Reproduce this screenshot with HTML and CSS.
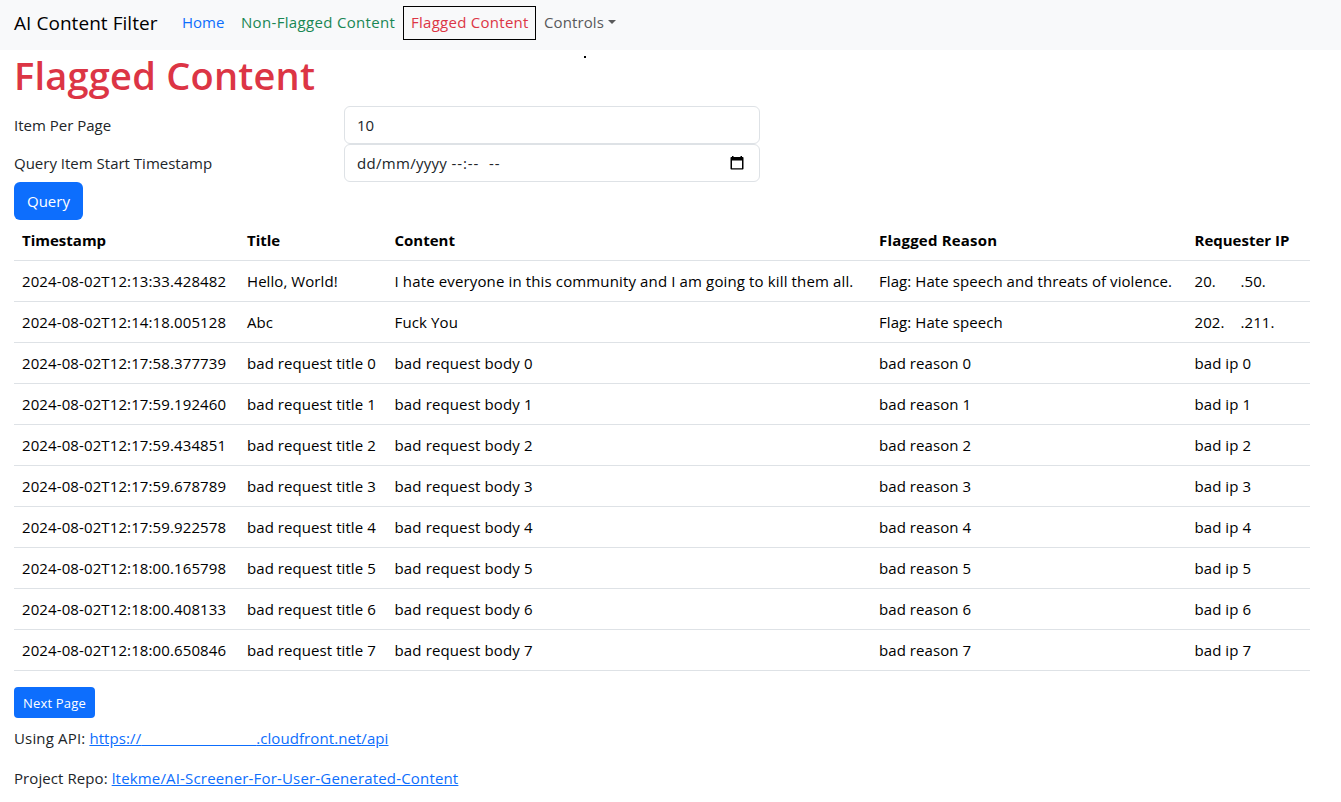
FILE: index.html
```html
<!DOCTYPE html>
<html lang="en">
<head>
<meta charset="utf-8">
<title>AI Content Filter</title>
<link rel="stylesheet" href="styles.css">
</head>
<body>
<nav class="navbar">
  <a class="brand">AI Content Filter</a>
  <a class="nav-link home">Home</a>
  <a class="nav-link safe">Non-Flagged Content</a>
  <a class="nav-link flagged active">Flagged Content</a>
  <a class="nav-link controls">Controls<span class="caret"></span></a>
  <span class="dot"></span>
</nav>
<main class="page">
  <h1 class="title">Flagged Content</h1>
  <form class="query">
    <label>Item Per Page</label>
    <div class="field"><span>10</span></div>
    <label>Query Item Start Timestamp</label>
    <div class="field"><span class="date">dd/mm/yyyy <span class="time">--:--&nbsp; --</span></span>
      <svg class="calendar" viewBox="0 0 16 16"><path fill="#000" fill-rule="evenodd" d="M3 1h1.500v1h7V1H13v1h.7c.5 0 .8.4.8.8v10.900c0 .5-.4.8-.8.8H2.300c-.5 0-.8-.4-.8-.8V2.800c0-.5.4-.8.8-.8H3zM3 5.500V13.300h10V5.500z"/></svg>
    </div>
    <button type="button" class="btn">Query</button>
  </form>
  <table class="items">
    <colgroup><col class="c-time"><col class="c-title"><col class="c-content"><col class="c-reason"><col class="c-ip"></colgroup>
    <thead><tr><th>Timestamp</th><th>Title</th><th>Content</th><th class="h-reason">Flagged Reason</th><th>Requester IP</th></tr></thead>
    <tbody>
      <tr><td>2024-08-02T12:13:33.428482</td><td>Hello, World!</td><td>I hate everyone in this community and I am going to kill them all.</td><td>Flag: Hate speech and threats of violence.</td><td><span class="ip-head">20.</span>.50.</td></tr>
      <tr><td>2024-08-02T12:14:18.005128</td><td>Abc</td><td>Fuck You</td><td>Flag: Hate speech</td><td><span class="ip-head">202.</span>.211.</td></tr>
      <tr><td>2024-08-02T12:17:58.377739</td><td>bad request title 0</td><td>bad request body 0</td><td>bad reason 0</td><td>bad ip 0</td></tr>
      <tr><td>2024-08-02T12:17:59.192460</td><td>bad request title 1</td><td>bad request body 1</td><td>bad reason 1</td><td>bad ip 1</td></tr>
      <tr><td>2024-08-02T12:17:59.434851</td><td>bad request title 2</td><td>bad request body 2</td><td>bad reason 2</td><td>bad ip 2</td></tr>
      <tr><td>2024-08-02T12:17:59.678789</td><td>bad request title 3</td><td>bad request body 3</td><td>bad reason 3</td><td>bad ip 3</td></tr>
      <tr><td>2024-08-02T12:17:59.922578</td><td>bad request title 4</td><td>bad request body 4</td><td>bad reason 4</td><td>bad ip 4</td></tr>
      <tr><td>2024-08-02T12:18:00.165798</td><td>bad request title 5</td><td>bad request body 5</td><td>bad reason 5</td><td>bad ip 5</td></tr>
      <tr><td>2024-08-02T12:18:00.408133</td><td>bad request title 6</td><td>bad request body 6</td><td>bad reason 6</td><td>bad ip 6</td></tr>
      <tr><td>2024-08-02T12:18:00.650846</td><td>bad request title 7</td><td>bad request body 7</td><td>bad reason 7</td><td>bad ip 7</td></tr>
    </tbody>
  </table>
  <button type="button" class="btn btn-sm">Next Page</button>
  <p class="note api">Using API: <a class="link">https://<span class="gap">&nbsp;</span>.cloudfront.net/api</a></p>
  <p class="note">Project Repo: <a class="link repo">ltekme/AI-Screener-For-User-Generated-Content</a></p>
</main>
</body>
</html>
```
FILE: styles.css
```css
* { box-sizing: border-box; }
body {
  margin: 0;
  background: #fff;
  color: #212529;
  font-family: "Segoe UI", "Open Sans", "Noto Sans", sans-serif;
  font-size: 15px;
  line-height: 24px;
  overflow: hidden;
}
.navbar {
  position: relative;
  display: flex;
  align-items: center;
  height: 50px;
  padding: 0 14px 4px;
  background: #f8f9fa;
  white-space: nowrap;
}
.brand { width: 160px; font-size: 19px; letter-spacing: .05px; color: #000; }
.nav-link { height: 34px; padding: 3px 0 0 7px; border: 1px solid transparent; }
.home { width: 59px; color: #0d6efd; }
.safe { width: 170px; letter-spacing: .33px; color: #198754; }
.flagged { width: 133px; letter-spacing: .27px; color: #dc3545; }
.active { border-color: #000; }
.controls { display: flex; gap: 4px; letter-spacing: .1px; color: #595a5b; }
.caret { align-self: flex-start; margin-top: 10px; border: 4.5px solid transparent; border-top-color: #595a5b; border-bottom: 0; }
.dot { position: absolute; left: 584px; top: 56px; width: 2px; height: 2px; background: #000; }
.page { padding: 0 31px 0 14px; }
.title { margin: 0; height: 56px; padding-top: 1px; font-size: 38px; font-weight: 600; letter-spacing: .22px; line-height: 48px; color: #dc3545; white-space: nowrap; }
.query { display: grid; grid-template-columns: 330px 416px; grid-auto-rows: 38px; align-items: center; justify-items: start; }
.field { display: flex; align-items: center; justify-content: space-between; width: 416px; height: 38px; padding: 0 14px 0 12px; border: 1px solid #dee2e6; border-radius: 6px; }
.date { letter-spacing: .3px; }
.time { letter-spacing: .95px; }
.calendar { width: 16px; height: 16px; }
.btn { height: 38px; padding: 0 13px; border: 0; border-radius: 6px; background: #0d6efd; color: #fff; font: inherit; line-height: 38px; white-space: nowrap; }
.btn-sm { display: block; width: 81px; height: 31px; margin-top: 16px; padding: 1px 8px 0; border-radius: 4px; font-size: 13px; letter-spacing: .2px; line-height: 30px; }
.items { width: 1296px; table-layout: fixed; border-collapse: separate; border-spacing: 0; color: #000; }
.c-time { width: 225px; }
.c-title { width: 147.500px; }
.c-content { width: 484.500px; }
.c-reason { width: 315.500px; }
.c-ip { width: 123.500px; }
.items th, .items td { height: 41px; padding: 8px; border-bottom: 1px solid #dee2e6; text-align: left; white-space: nowrap; }
.items th { font-weight: 700; }
.items .h-reason { letter-spacing: .2px; }
.items td { letter-spacing: .07px; }
.items td:nth-child(1) { letter-spacing: .11px; }
.items td:nth-child(3) { letter-spacing: .135px; }
.ip-head { display: inline-block; width: 46px; }
.note { margin: 8px 0 16px; letter-spacing: .08px; white-space: nowrap; }
.api { letter-spacing: .16px; }
.link { color: #0d6efd; text-decoration: underline; }
.api .link { letter-spacing: .08px; }
.gap { word-spacing: 111px; }
.link.repo { letter-spacing: .17px; }
```
